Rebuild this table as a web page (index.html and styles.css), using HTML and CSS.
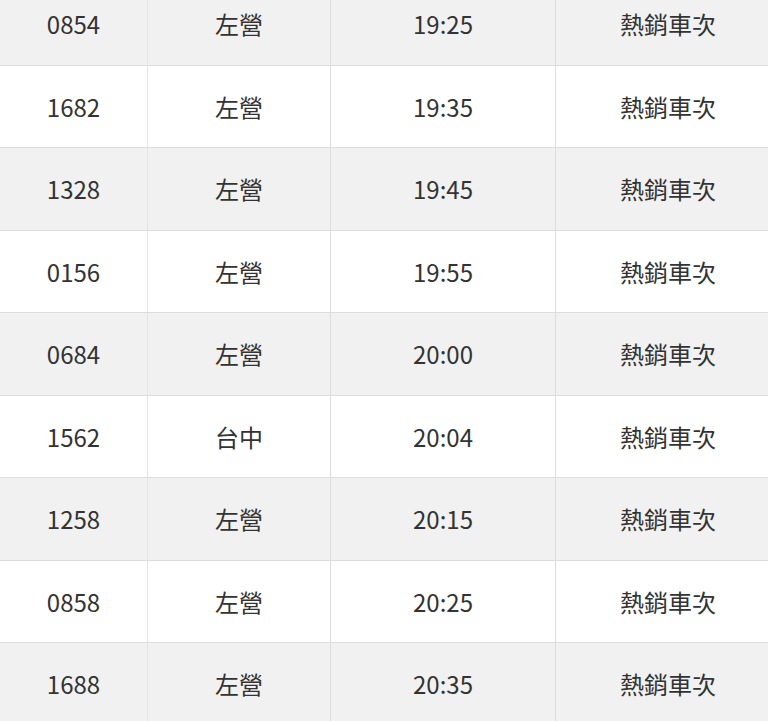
FILE: index.html
```html
<!DOCTYPE html>
<html lang="zh-Hant">
<head>
<meta charset="utf-8">
<link rel="stylesheet" href="styles.css">
</head>
<body>
<div class="table">
  <div class="row alt"><div class="c c1">0854</div><div class="c c2">左營</div><div class="c c3">19:25</div><div class="c c4">熱銷車次</div></div>
  <div class="row"><div class="c c1">1682</div><div class="c c2">左營</div><div class="c c3">19:35</div><div class="c c4">熱銷車次</div></div>
  <div class="row alt"><div class="c c1">1328</div><div class="c c2">左營</div><div class="c c3">19:45</div><div class="c c4">熱銷車次</div></div>
  <div class="row"><div class="c c1">0156</div><div class="c c2">左營</div><div class="c c3">19:55</div><div class="c c4">熱銷車次</div></div>
  <div class="row alt"><div class="c c1">0684</div><div class="c c2">左營</div><div class="c c3">20:00</div><div class="c c4">熱銷車次</div></div>
  <div class="row"><div class="c c1">1562</div><div class="c c2">台中</div><div class="c c3">20:04</div><div class="c c4">熱銷車次</div></div>
  <div class="row alt"><div class="c c1">1258</div><div class="c c2">左營</div><div class="c c3">20:15</div><div class="c c4">熱銷車次</div></div>
  <div class="row"><div class="c c1">0858</div><div class="c c2">左營</div><div class="c c3">20:25</div><div class="c c4">熱銷車次</div></div>
  <div class="row alt"><div class="c c1">1688</div><div class="c c2">左營</div><div class="c c3">20:35</div><div class="c c4">熱銷車次</div></div>
</div>
</body>
</html>
```
FILE: styles.css
```css
html, body {
  margin: 0;
  padding: 0;
  background: #ffffff;
  overflow: hidden;
}
body {
  font-family: "Noto Sans CJK TC", "Noto Sans", sans-serif;
  color: #333333;
  font-size: 24px;
}
.table {
  margin-top: -17px;
  width: 780px;
}
.row {
  display: grid;
  grid-template-columns: 148px 183px 225px 224px;
  height: 82.5px;
  box-sizing: border-box;
  border-bottom: 1px solid #dddddd;
  background: #ffffff;
}
.row.alt {
  background: #f1f1f1;
}
.c {
  display: flex;
  align-items: center;
  justify-content: center;
  box-sizing: border-box;
}
.c1 {
  border-right: 1px solid #e4e4e4;
}
.c2, .c3 {
  border-right: 1px solid #dddddd;
}
```
